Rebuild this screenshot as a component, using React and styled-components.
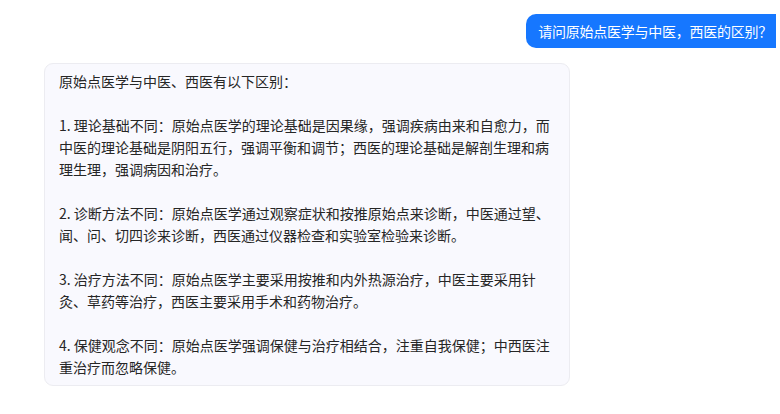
import React from "react";
import styled, { createGlobalStyle } from "styled-components";

const GlobalStyle = createGlobalStyle`
  html, body {
    margin: 0;
    padding: 0;
    background: #ffffff;
  }
  body {
    font-family: "Noto Sans CJK SC", "Liberation Sans", sans-serif;
  }
`;

const question = "请问原始点医学与中医，西医的区别？";

const answer = [
  "原始点医学与中医、西医有以下区别：",
  "1. 理论基础不同：原始点医学的理论基础是因果缘，强调疾病由来和自愈力，而中医的理论基础是阴阳五行，强调平衡和调节；西医的理论基础是解剖生理和病理生理，强调病因和治疗。",
  "2. 诊断方法不同：原始点医学通过观察症状和按推原始点来诊断，中医通过望、闻、问、切四诊来诊断，西医通过仪器检查和实验室检验来诊断。",
  "3. 治疗方法不同：原始点医学主要采用按推和内外热源治疗，中医主要采用针灸、草药等治疗，西医主要采用手术和药物治疗。",
  "4. 保健观念不同：原始点医学强调保健与治疗相结合，注重自我保健；中西医注重治疗而忽略保健。",
];

const Chat = () => (
  <Wrapper>
    <UserRow>
      <UserBubble>{question}</UserBubble>
    </UserRow>
    <BotRow>
      <BotBubble>
        {answer.map((para, index) => (
          <Paragraph key={index}>{para}</Paragraph>
        ))}
      </BotBubble>
    </BotRow>
  </Wrapper>
);

const App = () => (
  <>
    <GlobalStyle />
    <Chat />
  </>
);

const Wrapper = styled.div`
  display: flex;
  flex-direction: column;
  gap: 15px;
  width: 780px;
  height: 414px;
  padding-top: 14px;
  box-sizing: border-box;
  overflow: hidden;
`;
const UserRow = styled.div`
  display: flex;
  justify-content: flex-end;
  padding-right: 4px;
`;
const UserBubble = styled.div`
  background: #1677ff;
  color: #ffffff;
  font-size: 14px;
  line-height: 20px;
  letter-spacing: -0.25px;
  padding: 7px 4px 7px 12px;
  border-radius: 10px 0 0 10px;
  white-space: nowrap;
`;
const BotRow = styled.div`
  display: flex;
  padding-left: 44px;
`;
const BotBubble = styled.div`
  width: 526px;
  box-sizing: border-box;
  padding: 6px 14px 7px 14px;
  background: #f9f9fe;
  border: 1px solid #ececf1;
  border-radius: 9px;
  color: #262626;
  font-size: 14px;
  line-height: 22px;
  display: flex;
  flex-direction: column;
  gap: 22px;
`;
const Paragraph = styled.p`
  margin: 0;
`;

export default App;
